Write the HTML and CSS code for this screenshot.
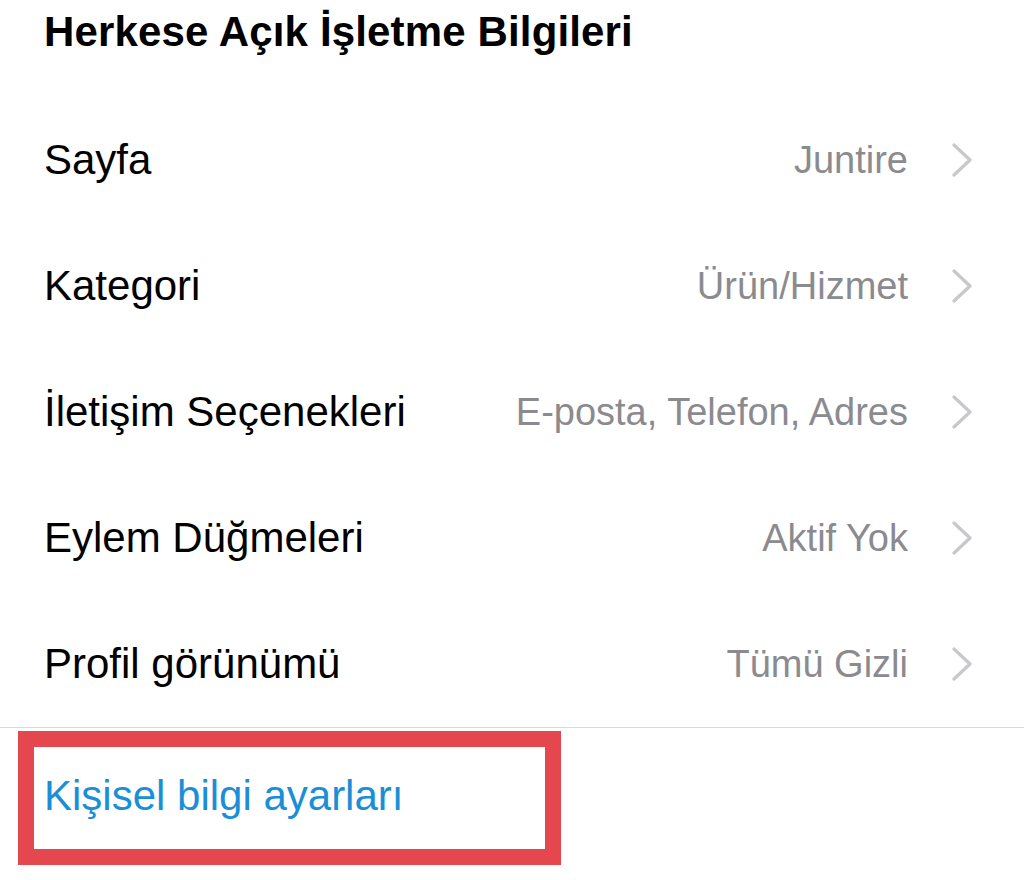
FILE: index.html
```html
<!DOCTYPE html>
<html lang="tr">
<head>
<meta charset="utf-8">
<link rel="stylesheet" href="styles.css">
</head>
<body>
<main class="page">
  <h1 class="title">Herkese Açık İşletme Bilgileri</h1>
  <ul class="list">
    <li class="row"><span class="label">Sayfa</span><span class="value">Juntire</span><svg class="chev" viewBox="0 0 20 34"><path d="M2 2 L18 17 L2 32"/></svg></li>
    <li class="row"><span class="label">Kategori</span><span class="value">Ürün/Hizmet</span><svg class="chev" viewBox="0 0 20 34"><path d="M2 2 L18 17 L2 32"/></svg></li>
    <li class="row"><span class="label">İletişim Seçenekleri</span><span class="value">E-posta, Telefon, Adres</span><svg class="chev" viewBox="0 0 20 34"><path d="M2 2 L18 17 L2 32"/></svg></li>
    <li class="row"><span class="label">Eylem Düğmeleri</span><span class="value">Aktif Yok</span><svg class="chev" viewBox="0 0 20 34"><path d="M2 2 L18 17 L2 32"/></svg></li>
    <li class="row"><span class="label">Profil görünümü</span><span class="value">Tümü Gizli</span><svg class="chev" viewBox="0 0 20 34"><path d="M2 2 L18 17 L2 32"/></svg></li>
  </ul>
  <div class="divider"></div>
  <div class="highlight"><span class="link">Kişisel bilgi ayarları</span></div>
</main>
</body>
</html>
```

FILE: styles.css
```css
html, body {
  margin: 0;
  padding: 0;
  background: #ffffff;
}
body {
  font-family: "Liberation Sans", Arial, sans-serif;
  width: 1024px;
  height: 880px;
  overflow: hidden;
}
.page {
  display: flex;
  flex-direction: column;
}
.title {
  margin: 0;
  padding-left: 44px;
  height: 64px;
  line-height: 64px;
  font-size: 42px;
  font-weight: 700;
  letter-spacing: 0.15px;
  color: #000;
}
.list {
  list-style: none;
  margin: 33px 0 0 0;
  padding: 0;
}
.row {
  height: 126px;
  display: flex;
  align-items: center;
  padding-left: 44px;
  padding-right: 52px;
}
.label {
  font-size: 42px;
  color: #000;
  flex: 1;
}
.value {
  font-size: 38px;
  color: #8b8b8f;
  margin-right: 44px;
}
.chev {
  width: 20px;
  height: 34px;
  flex: none;
}
.chev path {
  fill: none;
  stroke: #c7c7cc;
  stroke-width: 3.2;
  stroke-linecap: round;
  stroke-linejoin: round;
}
.divider {
  height: 1px;
  background: #dadade;
}
.highlight {
  box-sizing: border-box;
  margin: 3px 0 0 18px;
  width: 543px;
  height: 134px;
  border: 16px solid #e5474f;
  display: flex;
  align-items: center;
  padding-left: 10px;
}
.link {
  font-size: 42px;
  color: #1a8fd8;
  margin-top: -4px;
}
```
